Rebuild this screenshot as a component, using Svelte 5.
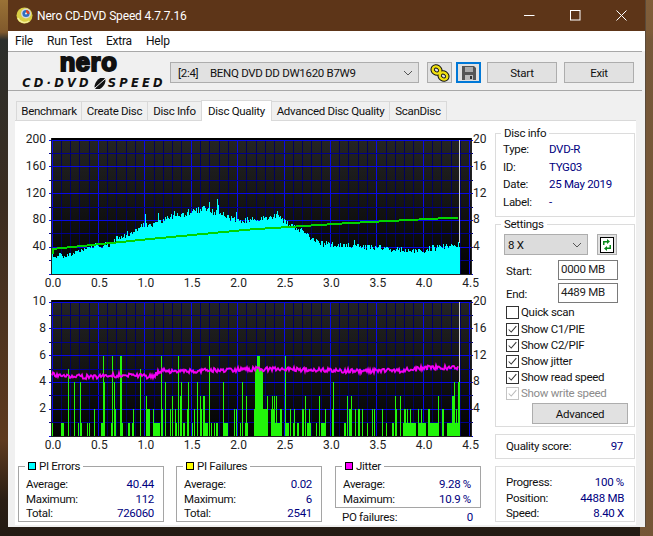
<script>
	const tabs = [
		{ name: 'Benchmark', w: 66 },
		{ name: 'Create Disc', w: 67 },
		{ name: 'Disc Info', w: 55 },
		{ name: 'Disc Quality', w: 71, active: true },
		{ name: 'Advanced Disc Quality', w: 119 },
		{ name: 'ScanDisc', w: 58 }
	];
	const discInfo = [
		['Type:', 'DVD-R'],
		['ID:', 'TYG03'],
		['Date:', '25 May 2019'],
		['Label:', '-']
	];
	const checks = [
		{ label: 'Show C1/PIE', on: true },
		{ label: 'Show C2/PIF', on: true },
		{ label: 'Show jitter', on: true },
		{ label: 'Show read speed', on: true },
		{ label: 'Show write speed', on: true, off: true }
	];
	const stats = [
		{ title: 'PI Errors', color: '#00ffff', rows: [['Average:', '40.44'], ['Maximum:', '112'], ['Total:', '726060']] },
		{ title: 'PI Failures', color: '#ffff00', rows: [['Average:', '0.02'], ['Maximum:', '6'], ['Total:', '2541']] }
	];
	const jitter = [['Average:', '9.28 %'], ['Maximum:', '10.9 %']];
	const progress = [['Progress:', '100 %'], ['Position:', '4488 MB'], ['Speed:', '8.40 X']];

	// plot geometry, in page pixels
	const LEFT = 52;
	const RIGHT = 470;
	const UNIT_X = 92.8;
	const STEP_Y = 13.4;
	const END_X = 459;

	function rng(seed) {
		let s = seed;
		return () => {
			s = (s * 16807) % 2147483647;
			return s / 2147483647;
		};
	}

	function lerp(points, x) {
		for (let i = 1; i < points.length; i++) {
			if (x <= points[i][0]) {
				const [x0, y0] = points[i - 1];
				const [x1, y1] = points[i];
				return y0 + ((y1 - y0) * (x - x0)) / (x1 - x0);
			}
		}
		return points[points.length - 1][1];
	}

	const envelope = [
		[52, 255], [70, 253.5], [92, 245], [110, 243.5], [117, 237], [130, 232], [143, 225], [157, 223],
		[170, 215], [187, 213], [203, 208], [220, 213], [237, 220], [260, 218], [277, 215], [290, 225],
		[303, 230], [310, 237], [323, 243], [350, 245], [383, 247], [417, 250.7], [433, 247], [457, 245], [460, 243]
	];
	const spikes = { 145: 214, 158: 213, 174: 211, 188: 209, 203: 206, 204: 206, 209: 202, 217: 199, 218: 205, 236: 212, 277: 211, 278: 215, 312: 238, 354: 240 };

	const noise1 = rng(4711);
	let cyan = `M${LEFT} 274`;
	for (let x = LEFT; x <= END_X; x++) {
		const top = spikes[x] ?? Math.round(lerp(envelope, x) + (noise1() - 0.35) * 6);
		cyan += `V${top}H${x + 1}`;
	}
	cyan += 'V274Z';

	const speed = [[52.5, 254], [52.5, 249], [150, 239], [250, 229.5], [350, 223], [458, 217.5]];
	let speedLine = '';
	for (const [x, y] of speed) speedLine += `${x},${y} `;

	const jitterPts = [
		[52, 374.5], [85, 377], [120, 375], [153, 376.5], [156, 374], [160, 371], [187, 371], [253, 369],
		[283, 369], [350, 371], [400, 370.7], [430, 367.5], [458, 367.5]
	];
	const noise2 = rng(90210);
	let jitterLine = '';
	for (let x = LEFT; x <= END_X - 1; x += 1) {
		jitterLine += `${x},${(lerp(jitterPts, x) + (noise2() - 0.5) * 4.6).toFixed(1)} `;
	}

	// [x, level, width] read off the reference
	const bars = [
		[52, 1], [61, 1, 3], [68, 5], [74, 4], [78, 1], [80, 4], [81, 1], [87, 1], [89, 1], [94, 2], [101, 1, 2], [103, 6], [104, 4],
		[111, 1, 2], [112, 6], [114, 4], [115, 2], [120, 6, 2], [122, 1], [128, 1, 2], [132, 1, 2], [133, 2], [140, 5], [146, 3],
		[147, 2, 3], [153, 2], [154, 1, 2], [156, 1, 4], [161, 6], [162, 2], [165, 4], [170, 2], [172, 3], [175, 2], [176, 1], [178, 6],
		[180, 3, 2], [181, 4], [183, 1, 2], [187, 2], [188, 4], [192, 1], [194, 2], [197, 4], [200, 3], [201, 2], [203, 3, 2], [205, 1, 3],
		[209, 6], [211, 1], [214, 1], [216, 1, 2], [223, 4], [224, 1, 3], [227, 1], [234, 2], [236, 2], [240, 1], [242, 4], [245, 1, 3], [246, 3],
		[254, 2, 3], [255, 5, 8], [257, 6, 3], [263, 2, 4], [267, 3], [271, 2, 4], [272, 3], [274, 3], [276, 3], [272, 1, 10], [280, 2, 2],
		[285, 6], [286, 1, 3], [290, 2], [293, 1], [294, 2], [297, 1, 2], [302, 2, 2], [305, 3], [307, 1, 4], [309, 2], [316, 1], [319, 3],
		[321, 1, 4], [325, 2], [332, 2, 2], [333, 4], [344, 1, 2], [347, 3], [349, 2, 2], [351, 3], [355, 2], [358, 2, 2], [362, 2], [367, 1],
		[372, 2], [374, 2], [382, 2], [386, 1], [392, 1, 2], [395, 3], [396, 2], [400, 3], [403, 1, 13], [404, 2], [405, 2], [407, 2], [410, 2],
		[418, 2], [418, 1, 8], [421, 2], [428, 1, 5], [428, 2, 2], [433, 1, 5], [438, 3], [442, 2, 2], [443, 2], [447, 1], [448, 1, 10],
		[452, 3, 2], [454, 4], [456, 2], [458, 4, 2]
	];

	const minorX = Array.from({ length: 46 }, (_, i) => LEFT + (i * UNIT_X) / 10);
	const majorX = ['0.0', '0.5', '1.0', '1.5', '2.0', '2.5', '3.0', '3.5', '4.0', '4.5'];
	const levels = Array.from({ length: 11 }, (_, i) => i);
</script>

{#snippet plot(top, leftLabels, rightLabels)}
	{@const bottom = top + STEP_Y * 10}
	<rect x={LEFT} y={top} width={RIGHT - LEFT + 1} height={bottom - top} fill="url(#plotbg)" />
	<rect x={LEFT - 1} y={top - 2} width={RIGHT - LEFT + 3} height="2" fill="#000" />
	<g shape-rendering="crispEdges">
		{#each minorX as x, i}
			<line x1={x} x2={x} y1={top} y2={bottom} stroke={i % 5 === 0 ? '#0808e8' : '#00005e'} />
		{/each}
		{#each levels as n}
			<line x1={LEFT - 3} x2={RIGHT + 3} y1={top + n * STEP_Y} y2={top + n * STEP_Y} stroke={n % 2 === 0 ? '#0808e8' : '#00008c'} />
		{/each}
		<line x1={LEFT - 1} x2={LEFT - 1} y1={top - 2} y2={bottom + 1} stroke="#222" />
		<line x1={RIGHT + 1} x2={RIGHT + 1} y1={top - 2} y2={bottom + 1} stroke="#222" />
		<line x1={LEFT - 1} x2={RIGHT + 1} y1={bottom + 0.5} y2={bottom + 0.5} stroke="#222" />
	</g>
	{#each leftLabels as label, i}
		<text class="axis" x="46" y={top + i * STEP_Y * 2 + 3} text-anchor="end">{label}</text>
	{/each}
	{#each rightLabels as label, i}
		<text class="axis" x="473" y={top + i * STEP_Y * 2 + 3}>{label}</text>
	{/each}
	{#each majorX as label, i}
		<text class="axis" x={LEFT + 1 + i * UNIT_X / 2} y={bottom + 12.5} text-anchor="middle">{label}</text>
	{/each}
{/snippet}

<div class="desktop">
	<div class="window">
		<header class="titlebar">
			<svg class="appicon" viewBox="0 0 17 17" width="17" height="17">
				<circle cx="8.5" cy="8.5" r="8" fill="#d9cf45" />
				<path d="M2 11a7 7 0 0 0 11 3" fill="none" stroke="#f4ee9a" stroke-width="1.5" />
				<circle cx="10" cy="6.5" r="5" fill="#d8d8d8" />
				<circle cx="10" cy="6.5" r="3.6" fill="#2f6fc0" />
				<path d="M10 6.5V3a3.5 3.5 0 0 1 3.4 4z" fill="#d8452c" />
				<circle cx="10" cy="6.5" r="1" fill="#eee" />
			</svg>
			<span class="title">Nero CD-DVD Speed 4.7.7.16</span>
			<div class="controls">
				<svg viewBox="0 0 11 11" width="11" height="11"><path d="M0 5.5h10.5" stroke="#fff" fill="none" /></svg>
				<svg viewBox="0 0 11 11" width="11" height="11"><rect x="0.5" y="0.5" width="9.5" height="9.5" stroke="#fff" fill="none" /></svg>
				<svg viewBox="0 0 11 11" width="11" height="11"><path d="M0.5 0.5l10 10M10.5 0.5l-10 10" stroke="#fff" fill="none" /></svg>
			</div>
		</header>

		<nav class="menu">
			<span>File</span><span>Run Test</span><span>Extra</span><span>Help</span>
		</nav>

		<div class="toolbar">
			<div class="logo">
				<div class="nero">nero</div>
				<div class="cdspeed">
					<span>CD·DVD</span>
					<svg viewBox="0 0 16 11" width="16" height="11">
						<ellipse cx="8" cy="5.5" rx="4.2" ry="7" transform="rotate(38 8 5.5)" fill="#111" />
						<path d="M3 10L13 1" stroke="#eee" stroke-width="1" />
					</svg>
					<span>SPEED</span>
				</div>
			</div>
			<div class="drive">
				<span class="port">[2:4]</span>
				<span>BENQ DVD DD DW1620 B7W9</span>
				<svg class="chev" viewBox="0 0 10 6" width="10" height="6"><path d="M1 1l4 4 4-4" fill="none" stroke="#555" /></svg>
			</div>
			<button class="tool first" aria-label="Disc info">
				<svg viewBox="0 0 20 18" width="20" height="18">
					<g fill="none" stroke="#111" stroke-width="4.4">
						<ellipse cx="6.5" cy="6" rx="4" ry="3.4" transform="rotate(35 6.5 6)" />
						<ellipse cx="13.5" cy="12" rx="4" ry="3.4" transform="rotate(35 13.5 12)" />
					</g>
					<g fill="none" stroke="#f0e010" stroke-width="2.4">
						<ellipse cx="6.5" cy="6" rx="4" ry="3.4" transform="rotate(35 6.5 6)" />
						<ellipse cx="13.5" cy="12" rx="4" ry="3.4" transform="rotate(35 13.5 12)" />
					</g>
				</svg>
			</button>
			<button class="tool save" aria-label="Save">
				<svg viewBox="0 0 14 14" width="14" height="14">
					<path d="M0 0h12l2 2v12H0z" fill="#555" />
					<rect x="3" y="1" width="8" height="5" fill="#aaa" />
					<rect x="3" y="9" width="8" height="5" fill="#bbb" />
					<rect x="8" y="10" width="2" height="3" fill="#333" />
				</svg>
			</button>
			<button class="act start">Start</button>
			<button class="act">Exit</button>
		</div>

		<div class="tabs">
			{#each tabs as tab}
				<div class="tab" class:active={tab.active} style:width="{tab.w}px">{tab.name}</div>
			{/each}
		</div>

		<main class="panel">
			<section class="left">
				<svg class="chart" viewBox="15 130 480 162" width="480" height="162">
					<defs>
						<linearGradient id="plotbg" x1="0" y1="0" x2="0" y2="1">
							<stop offset="0" stop-color="#242424" />
							<stop offset="1" stop-color="#020202" />
						</linearGradient>
					</defs>
					{@render plot(140, [200, 160, 120, 80, 40], [20, 16, 12, 8, 4])}
					<path d={cyan} fill="#00ffff" shape-rendering="crispEdges" />
					<polyline points={speedLine} fill="none" stroke="#00d400" stroke-width="2" shape-rendering="crispEdges" />
					<line x1="459.5" x2="459.5" y1="140" y2="243" stroke="#d0d0d0" shape-rendering="crispEdges" />
				</svg>
				<svg class="chart" viewBox="15 292 480 163" width="480" height="163">
					{@render plot(302, [10, 8, 6, 4, 2], [20, 16, 12, 8, 4])}
					<line x1="459.5" x2="459.5" y1="302" y2="436" stroke="#d0d0d0" shape-rendering="crispEdges" />
					<g fill="#22f50a" shape-rendering="crispEdges">
						{#each bars as [x, level, w = 1]}
							<rect {x} y={436 - level * STEP_Y} width={w} height={level * STEP_Y} />
						{/each}
					</g>
					<polyline points={jitterLine} fill="none" stroke="#f400f4" stroke-width="1.8" />
				</svg>

				<div class="stats">
					{#each stats as s}
						<fieldset class="stat">
							<legend><i class="swatch" style:background={s.color}></i>{s.title}</legend>
							{#each s.rows as [k, v]}
								<div class="row"><span>{k}</span><b>{v}</b></div>
							{/each}
						</fieldset>
					{/each}
					<div class="jitter">
						<fieldset class="stat short">
							<legend><i class="swatch" style:background="#ff00ff"></i>Jitter</legend>
							{#each jitter as [k, v]}
								<div class="row"><span>{k}</span><b>{v}</b></div>
							{/each}
						</fieldset>
						<div class="row po"><span>PO failures:</span><b>0</b></div>
					</div>
				</div>
			</section>

			<aside class="side">
				<fieldset class="info">
					<legend>Disc info</legend>
					{#each discInfo as [k, v]}
						<div class="inforow"><span>{k}</span><b>{v}</b></div>
					{/each}
				</fieldset>

				<fieldset class="settings">
					<legend>Settings</legend>
					<div class="speedrow">
						<div class="combo">
							<span>8 X</span>
							<svg viewBox="0 0 10 6" width="10" height="6"><path d="M1 1l4 4 4-4" fill="none" stroke="#555" /></svg>
						</div>
						<button class="refresh" aria-label="Refresh">
							<svg viewBox="0 0 14 16" width="14" height="16">
								<rect x="0.5" y="0.5" width="13" height="15" fill="#fff" stroke="#000" />
								<path d="M7 2L10 4.5 7 7V5.5H4.5V8H3V4H7zM7 14L4 11.5 7 9V10.5H9.5V8H11V12H7z" fill="#0a8a1a" />
							</svg>
						</button>
					</div>
					<div class="field first"><span>Start:</span><div class="input">0000 MB</div></div>
					<div class="field"><span>End:</span><div class="input">4489 MB</div></div>
					<div class="check quick"><i class="box"></i><span>Quick scan</span></div>
					{#each checks as c}
						<div class="check" class:off={c.off}>
							<i class="box">
								<svg viewBox="0 0 13 13" width="11" height="11"><path d="M2 6.5l3 3 6-7" fill="none" stroke="currentColor" stroke-width="1.2" /></svg>
							</i>
							<span>{c.label}</span>
						</div>
					{/each}
					<button class="advanced">Advanced</button>
				</fieldset>

				<fieldset class="quality">
					<span>Quality score:</span><b>97</b>
				</fieldset>

				<fieldset class="progress">
					{#each progress as [k, v]}
						<div class="row"><span>{k}</span><b>{v}</b></div>
					{/each}
				</fieldset>
			</aside>
		</main>
	</div>
</div>

<style>
	:global(body) {
		margin: 0;
		font-family: Roboto, "Noto Sans", sans-serif;
		font-size: 11.5px;
		letter-spacing: -0.3px;
		color: #111;
	}
	.desktop {
		width: 653px;
		height: 536px;
		box-sizing: border-box;
		padding: 0 8px 9px;
		overflow: hidden;
		background:
			linear-gradient(90deg, rgba(0, 0, 0, 0) 0 98%, rgba(125, 92, 58, 0.9) 98%),
			linear-gradient(180deg, #9a7236 0, #80592c 32px, #2c2f2c 40px, #3a2c20 200px, #5e3a1e 440px, #2a1e14 500px, #231b14 100%);
	}
	.window {
		height: 527px;
		display: flex;
		flex-direction: column;
		background: #f0f0f0;
		box-shadow: 1px 0 0 #5a4a3a;
	}
	.titlebar {
		height: 31px;
		flex: none;
		display: flex;
		align-items: center;
		padding-left: 8px;
		background: #5d3518;
		color: #fff;
	}
	.title {
		margin-left: 4px;
		font-size: 12px;
		letter-spacing: -0.15px;
	}
	.controls {
		margin-left: auto;
		margin-right: 18px;
		display: flex;
		gap: 35px;
	}
	.menu {
		height: 20px;
		flex: none;
		display: flex;
		align-items: center;
		gap: 14px;
		padding-left: 7px;
		background: #fff;
		font-size: 12px;
		letter-spacing: -0.2px;
	}
	.toolbar {
		height: 35px;
		flex: none;
		display: flex;
		align-items: center;
		padding: 3px 0 0 10px;
		margin-right: 3px;
		border-top: 1px solid #a8a8a8;
		border-bottom: 1px solid #a8a8a8;
	}
	.logo {
		width: 152px;
		height: 36px;
		flex: none;
		margin-top: -2px;
		color: #111;
		text-align: center;
	}
	.nero {
		font-family: "Liberation Sans", sans-serif;
		font-weight: 700;
		font-size: 25.5px;
		line-height: 16px;
		height: 24px;
		padding-right: 11px;
		letter-spacing: 0.6px;
		-webkit-text-stroke: 2px #111;
	}
	.cdspeed {
		display: flex;
		justify-content: center;
		align-items: center;
		font-family: "DejaVu Sans", sans-serif;
		font-style: italic;
		font-weight: 700;
		font-size: 11.5px;
		line-height: 11px;
		letter-spacing: 3.2px;
	}
	.drive {
		width: 249px;
		height: 21px;
		box-sizing: border-box;
		display: flex;
		align-items: center;
		padding-left: 7px;
		background: #e1e1e1;
		border: 1px solid #adadad;
	}
	.port {
		width: 32px;
	}
	.chev {
		margin-left: auto;
		margin-right: 5px;
	}
	button {
		font: inherit;
		letter-spacing: inherit;
		color: #111;
		padding: 0;
		background: #e1e1e1;
		border: 1px solid #adadad;
		display: flex;
		align-items: center;
		justify-content: center;
	}
	.tool {
		width: 25px;
		height: 21px;
		margin-left: 4px;
	}
	.tool.first {
		margin-left: 8px;
	}
	.tool.save {
		border: 2px solid #0078d7;
	}
	.act {
		width: 70px;
		height: 21px;
		margin-left: 7px;
	}
	.act.start {
		margin-left: 6px;
	}
	.tabs {
		height: 21px;
		flex: none;
		display: flex;
		align-items: flex-end;
		margin-top: 8px;
		padding-left: 8px;
		position: relative;
		z-index: 1;
	}
	.tab {
		height: 19px;
		box-sizing: border-box;
		border: 1px solid #d9d9d9;
		border-bottom: none;
		margin-right: -1px;
		text-align: center;
		line-height: 19px;
		white-space: nowrap;
	}
	.tab.active {
		height: 21px;
		background: #fff;
		line-height: 20px;
		margin-bottom: -1px;
		position: relative;
		z-index: 1;
	}
	.panel {
		margin: 0 9px 2px 7px;
		height: 405px;
		flex: none;
		display: flex;
		background: #fff;
		border-top: 1px solid #d9d9d9;
		box-sizing: border-box;
	}
	.left {
		width: 480px;
		flex: none;
		padding-top: 9px;
	}
	.chart {
		display: block;
	}
	.axis {
		font-size: 12px;
		letter-spacing: 0;
		fill: #222;
	}
	.stats {
		display: flex;
		gap: 12px;
		margin: 4px 0 0 3px;
		height: 63px;
	}
	fieldset {
		margin: 0;
		padding: 0;
		min-width: 0;
		box-sizing: border-box;
		border: 1px solid #dcdcdc;
	}
	legend {
		padding: 0 3px;
		margin-left: -2px;
		line-height: 15px;
	}
	b {
		font-weight: 400;
		color: #000080;
	}
	.row {
		display: flex;
		justify-content: space-between;
		line-height: 14.7px;
	}
	.stat {
		width: 146px;
		height: 63px;
		padding: 3px 9px 0 7px;
		border-color: #a5a5a5;
	}
	.short {
		height: 49px;
	}
	.stat legend {
		margin-left: -1px;
	}
	.swatch {
		display: inline-block;
		width: 6px;
		height: 6px;
		margin-right: 3px;
		border: 1px solid #000;
	}
	.jitter {
		margin-left: 1px;
		width: 147px;
	}
	.po {
		padding: 2px 9px 0 7px;
	}
	.side {
		width: 140px;
		flex: none;
		padding-top: 5px;
		display: flex;
		flex-direction: column;
	}
	.info {
		height: 91px;
		padding-left: 7px;
	}
	.inforow {
		display: flex;
		line-height: 17.5px;
	}
	.inforow span {
		width: 46px;
	}
	.settings {
		height: 210px;
		padding-left: 8px;
	}
	.settings legend {
		margin-left: -3px;
	}
	.speedrow {
		display: flex;
		gap: 9px;
		margin-top: 2px;
	}
	.combo {
		width: 84px;
		height: 21px;
		box-sizing: border-box;
		display: flex;
		align-items: center;
		justify-content: space-between;
		padding: 0 5px 0 3px;
		background: #dcdcdc;
		border: 1px solid #adadad;
	}
	.refresh {
		width: 20px;
		height: 21px;
	}
	.field {
		display: flex;
		align-items: center;
		justify-content: space-between;
		width: 112px;
		height: 20px;
		margin-top: 3px;
		padding-left: 2px;
	}
	.field span {
		padding-top: 2px;
	}
	.field.first {
		margin-top: 5px;
	}
	.input {
		width: 60px;
		height: 20px;
		box-sizing: border-box;
		border: 1px solid #7a7a7a;
		padding-left: 2px;
		line-height: 16px;
		color: #222;
	}
	.check {
		display: flex;
		align-items: center;
		gap: 2px;
		height: 16px;
		padding-left: 2px;
	}
	.check.quick {
		margin-top: 1px;
		margin-bottom: 1px;
	}
	.box {
		width: 13px;
		height: 13px;
		box-sizing: border-box;
		border: 1px solid #333;
		color: #333;
		display: flex;
		align-items: center;
		justify-content: center;
	}
	.check.off {
		color: #8c8c8c;
	}
	.off .box {
		border-color: #c4c4c4;
		color: #bbb;
	}
	.advanced {
		width: 96px;
		height: 21px;
		margin: 2px 0 0 28px;
	}
	.quality {
		height: 25px;
		margin-top: 7px;
		padding: 0 11px 0 10px;
		display: flex;
		align-items: center;
		justify-content: space-between;
		line-height: 23px;
	}
	.progress {
		height: 56px;
		margin-top: 7px;
		padding: 8px 10px 0;
	}
	.progress .row {
		line-height: 15.5px;
	}
</style>
